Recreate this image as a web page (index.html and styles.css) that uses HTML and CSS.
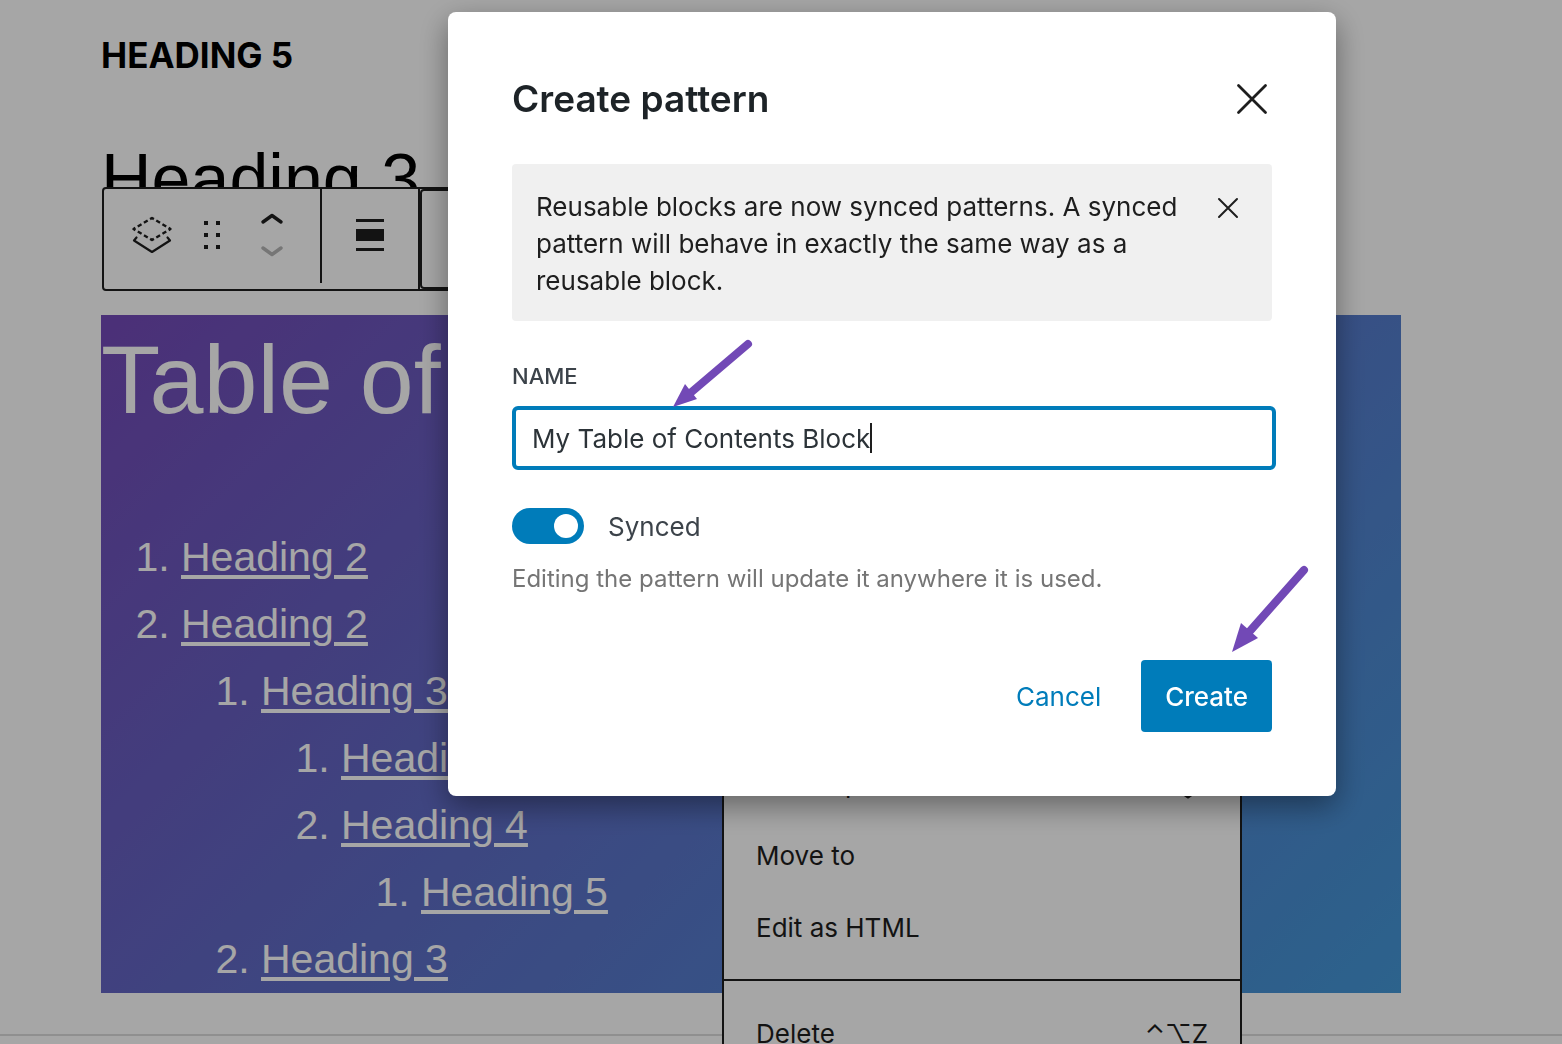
FILE: index.html
```html
<!DOCTYPE html>
<html lang="en">
  <head>
    <meta charset="UTF-8" />
    <meta name="viewport" content="width=device-width, initial-scale=1.0" />
    <title>Create pattern</title>
    <link rel="stylesheet" href="styles.css">
  </head>
  <body>
    <!-- Editor Canvas -->
    <main class="editor">
      <h5 class="small-heading">HEADING 5</h5>
      <h3 class="big-heading">Heading 3</h3>

      <section class="toc">
        <h2>Table of</h2>
        <ol>
          <li><a href="#h1">Heading 2</a></li>
          <li><a href="#h2">Heading 2</a>
            <ol>
              <li><a href="#h3">Heading 3</a>
                <ol>
                  <li><a href="#h4">Heading 4</a></li>
                  <li><a href="#h5">Heading 4</a>
                    <ol>
                      <li><a href="#h6">Heading 5</a></li>
                    </ol>
                  </li>
                </ol>
              </li>
              <li><a href="#h7">Heading 3</a></li>
            </ol>
          </li>
        </ol>
      </section>

      <!-- Block Toolbar -->
      <div class="toolbar">
        <div class="toolbar-group">
          <button aria-label="Pattern">
            <svg width="48" height="48" viewBox="0 0 48 48">
              <path class="dashed" d="M24 7 42.500 18 24 29 5.500 18Z" />
              <path d="M8.5 26.5 6 29.5 24 41 42 29.5 39.5 26.5" stroke-width="2.2" />
            </svg>
          </button>
          <button aria-label="Drag">
            <svg width="48" height="48" viewBox="0 0 48 48">
              <path class="solid" d="M16 10h4v4h-4zM28 10h4v4h-4zM16 22h4v4h-4zM28 22h4v4h-4zM16 34h4v4h-4zM28 34h4v4h-4z" />
            </svg>
          </button>
          <button aria-label="Move up or down">
            <svg width="48" height="48" viewBox="0 0 48 48">
              <path d="M15 11 24 4.500 33 11" stroke-width="3.4" />
              <path class="off" d="M15 37 24 43.500 33 37" stroke-width="3.4" />
            </svg>
          </button>
        </div>
        <div class="toolbar-group align-group">
          <button aria-label="Align">
            <svg width="48" height="48" viewBox="0 0 48 48">
              <path class="solid" d="M10 8h28v3H10zM10 18h28v12H10zM10 37h28v3H10z" />
            </svg>
          </button>
        </div>
        <div class="toolbar-focus"></div>
      </div>

      <!-- Options Menu -->
      <div class="menu">
        <div class="menu-group">
          <button>Create pattern/reusable block
            <svg width="48" height="48" viewBox="0 0 48 48"><path d="M8 24 28 4 48 24 28 38Z" stroke-width="3" /></svg>
          </button>
          <button>Move to</button>
          <button>Edit as HTML</button>
        </div>
        <div class="menu-group">
          <button>Delete <span>⌃⌥Z</span></button>
        </div>
      </div>
    </main>
    <footer class="editor-footer"></footer>

    <!-- Create Pattern Modal -->
    <div class="overlay">
      <form class="modal" role="dialog" aria-labelledby="modalTitle">
        <div class="modal-header">
          <h1 id="modalTitle">Create pattern</h1>
          <button type="button" class="close-btn" aria-label="Close">
            <svg width="40" height="40" viewBox="0 0 40 40"><path d="M6.500 6.500 33.500 33.500M33.500 6.500 6.500 33.500" stroke-width="2.8" /></svg>
          </button>
        </div>

        <div class="notice">
          <p>Reusable blocks are now synced patterns. A synced pattern will behave in exactly the same way as a reusable block.</p>
          <button type="button" class="close-btn" aria-label="Dismiss">
            <svg width="40" height="40" viewBox="0 0 40 40"><path d="M11 11 29 29M29 11 11 29" stroke-width="2" /></svg>
          </button>
        </div>

        <label class="name-label" for="name">NAME</label>
        <div class="name-field">
          <input type="text" id="name" value="My Table of Contents Block" />
          <span class="caret"></span>
        </div>

        <div class="sync-row">
          <input type="checkbox" id="synced" checked />
          <label for="synced">Synced</label>
        </div>
        <p class="help">Editing the pattern will update it anywhere it is used.</p>

        <div class="actions">
          <button type="button" class="cancel-btn">Cancel</button>
          <button type="button" class="create-btn">Create</button>
        </div>

        <!-- Pointer arrows -->
        <svg class="arrow arrow-name" width="88" height="76" viewBox="0 0 88 76">
          <path d="M80 8 20 59" />
          <polygon points="5,71 17,48 29,63" />
        </svg>
        <svg class="arrow arrow-create" width="88" height="96" viewBox="0 0 88 96">
          <path d="M80 8 26 69" />
          <polygon points="8,90 17,61 34,76" />
        </svg>
      </form>
    </div>
  </body>
</html>
```

FILE: styles.css
```css
* {
  box-sizing: border-box;
}
body {
  margin: 0;
  height: 100vh;
  overflow: hidden;
  background: #fff;
  color: #1e1e1e;
  font-family: Inter, "Liberation Sans", sans-serif;
  font-size: 26px;
}
h1, h2, h3, h5, p, ol {
  margin: 0;
}
button {
  padding: 0;
  border: none;
  background: none;
  color: inherit;
  font: inherit;
  cursor: pointer;
}
svg {
  display: block;
  fill: none;
  stroke: #1e1e1e;
  stroke-linecap: round;
  stroke-linejoin: round;
}

/* Editor canvas */
.editor {
  position: relative;
  padding: 28px 161px 41px 101px;
}
.small-heading {
  color: #000;
  font-size: 35px;
  font-weight: 700;
  line-height: 54px;
}
.big-heading {
  margin: 57px 0 96px;
  color: #000;
  font-family: "Liberation Sans", Arial, sans-serif;
  font-size: 70px;
  font-weight: 400;
  line-height: 80px;
}
.toc {
  background: linear-gradient(135deg, #744ab8, #4498d8);
  color: #fff;
  font-family: "Liberation Sans", Arial, sans-serif;
}
.toc h2 {
  margin-bottom: 79px;
  font-size: 97px;
  font-weight: 400;
  line-height: 130px;
}
.toc ol {
  padding-left: 80px;
  font-size: 41px;
  line-height: 67px;
}
.toc a {
  color: #fff;
  text-decoration-thickness: 4px;
  text-underline-offset: 4px;
}
.editor-footer {
  height: 40px;
  border-top: 2px solid #dcdcdc;
}

/* Block toolbar */
.toolbar {
  position: absolute;
  top: 187px;
  left: 102px;
  display: flex;
  width: 800px;
  height: 104px;
  border: 2px solid #1e1e1e;
  border-radius: 4px;
  background: #fff;
}
.toolbar-group {
  display: flex;
  align-items: center;
  gap: 12px;
  height: 94px;
  padding: 0 24px 2px;
  border-right: 2px solid #1e1e1e;
}
.align-group {
  height: 100px;
  padding-bottom: 8px;
}
.toolbar-focus {
  flex: 1;
  border: 2px solid #1e1e1e;
  border-radius: 4px;
}
.solid {
  fill: #1e1e1e;
  stroke: none;
}
.dashed {
  stroke-width: 2.4;
  stroke-linecap: butt;
  stroke-dasharray: 4.4 2.77;
  stroke-dashoffset: 2.2;
}
.off {
  stroke: #b5b5b5;
}

/* Options menu */
.menu {
  position: absolute;
  top: 729px;
  left: 722px;
  width: 520px;
  border: 2px solid #1e1e1e;
  background: #fff;
}
.menu-group {
  padding: 16px 32px;
}
.menu-group + .menu-group {
  border-top: 2px solid #1e1e1e;
}
.menu button {
  display: flex;
  justify-content: space-between;
  align-items: center;
  width: 100%;
  height: 72px;
  text-align: left;
}

/* Modal */
.overlay {
  position: fixed;
  inset: 0;
  padding: 12px 226px 0 448px;
  background: rgba(0, 0, 0, 0.35);
}
.modal {
  position: relative;
  padding: 64px;
  border-radius: 8px;
  background: #fff;
  box-shadow: 0 10px 30px rgba(0, 0, 0, 0.4);
}
.modal-header {
  display: flex;
  justify-content: space-between;
  align-items: center;
  height: 46px;
  margin-bottom: 42px;
}
h1 {
  color: #1d2327;
  font-size: 37px;
  font-weight: 600;
  line-height: 46px;
}
.notice {
  display: flex;
  justify-content: space-between;
  align-items: flex-start;
  padding: 24px 24px 22px;
  border-radius: 4px;
  background: #f0f0f0;
}
.notice p {
  width: 656px;
  line-height: 37px;
}
.name-label {
  display: block;
  margin: 39px 0 14px;
  color: #3c434a;
  font-size: 22px;
  font-weight: 500;
  line-height: 32px;
}
.name-field {
  position: relative;
  width: calc(100% + 4px);
}
.name-field input {
  display: block;
  width: 100%;
  height: 64px;
  padding: 0 16px;
  border: 4px solid #007cba;
  border-radius: 6px;
  outline: none;
  color: #2c3338;
  font: inherit;
}
.caret {
  position: absolute;
  top: 17px;
  left: 358px;
  width: 2px;
  height: 30px;
  background: #1e1e1e;
}
.sync-row {
  display: flex;
  align-items: center;
  gap: 24px;
  height: 36px;
  margin-top: 38px;
  color: #3c434a;
}
.sync-row input {
  appearance: none;
  display: flex;
  align-items: center;
  justify-content: flex-end;
  width: 72px;
  height: 36px;
  margin: 0;
  padding: 6px;
  border-radius: 18px;
  background: #007cba;
}
.sync-row input::before {
  content: "";
  width: 24px;
  height: 24px;
  border-radius: 50%;
  background: #fff;
}
.help {
  margin: 19px 0 65px;
  color: #757575;
  font-size: 24px;
  line-height: 32px;
}
.actions {
  display: flex;
  justify-content: flex-end;
  gap: 16px;
}
.actions button {
  height: 72px;
  padding: 0 24px;
  border-radius: 4px;
}
.cancel-btn {
  color: #007cba;
}
.create-btn {
  background: #007cba;
  color: #fff;
  font-weight: 500;
}

/* Pointer arrows */
.arrow {
  position: absolute;
  stroke: #7249b6;
}
.arrow path {
  stroke-width: 8;
}
.arrow polygon {
  fill: #7249b6;
  stroke: none;
}
.arrow-name {
  top: 324px;
  left: 220px;
}
.arrow-create {
  top: 550px;
  left: 776px;
}
```
